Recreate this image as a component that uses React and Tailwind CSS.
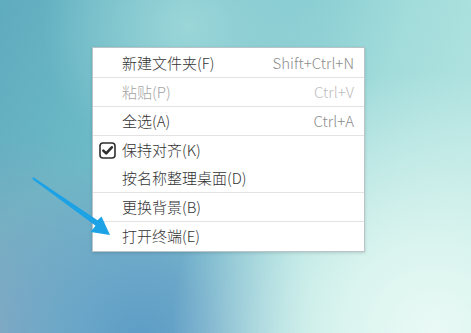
import React from 'react';

// Desktop right-click menu items; null marks a separator line.
const items = [
  { label: '新建文件夹(F)', shortcut: 'Shift+Ctrl+N' },
  null,
  { label: '粘贴(P)', shortcut: 'Ctrl+V', disabled: true },
  null,
  { label: '全选(A)', shortcut: 'Ctrl+A' },
  null,
  { label: '保持对齐(K)', checked: true },
  { label: '按名称整理桌面(D)' },
  null,
  { label: '更换背景(B)' },
  null,
  { label: '打开终端(E)' },
];

const CheckBox = () => (
  <svg width="17" height="17" viewBox="0 0 17 17" fill="none">
    <rect x="1" y="1" width="15" height="15" rx="3" stroke="#2f2f2f" strokeWidth="1.6" />
    <path d="M4.3 8.6 L7.2 11.4 L12.8 5.3" stroke="#2f2f2f" strokeWidth="2.6" strokeLinecap="round" strokeLinejoin="round" />
  </svg>
);

const MenuItem = ({ item }) => (
  <div className="flex h-[28px] items-center pr-[10px]">
    <div className="flex w-[29px] items-center justify-end pr-[6px]">
      {item.checked && <CheckBox />}
    </div>
    <span className={`flex-1 ${item.disabled ? 'text-[#a3a3a3]' : 'text-[#333333]'}`}>{item.label}</span>
    {item.shortcut && (
      <span className={item.disabled ? 'text-[#bdbdbd]' : 'text-[#8c8c8c]'}>{item.shortcut}</span>
    )}
  </div>
);

const App = () => {
  return (
    <div className="relative h-[333px] w-[471px] overflow-hidden bg-[radial-gradient(circle_at_92%_100%,#eafaf6_0%,#d8f3ee_18%,transparent_48%),radial-gradient(circle_at_30%_102%,#5d9dc6_0%,#6aa6c8_14%,transparent_38%),radial-gradient(circle_at_0%_100%,#88a9c2_0%,transparent_35%),radial-gradient(circle_at_40%_8%,#9bd6d8_0%,transparent_35%),linear-gradient(110deg,#60acbf_0%,#71bfca_35%,#a2dcdb_70%,#b9e7e3_100%)] pl-[92px] pt-[47px] font-['Noto_Sans_CJK_SC','Noto_Sans',sans-serif] text-[15px] font-light">
      {/* Context menu */}
      <div className="w-[273px] border border-[#b9c4c8] bg-white py-[1px] shadow-[0_1px_3px_rgba(0,0,0,0.15)]">
        {items.map((item, i) =>
          item ? <MenuItem key={i} item={item} /> : <div key={i} className="h-px bg-[#e3e3e3]" />
        )}
      </div>

      {/* Annotation arrow */}
      <svg className="absolute left-0 top-0" width="471" height="333" viewBox="0 0 471 333">
        <polygon points="33,177 97.5,220.3 101.5,216.5 110,235 90.5,232 95.5,225.8 32.5,179.3" fill="#1da2e6" />
      </svg>
    </div>
  );
};

export default App;
